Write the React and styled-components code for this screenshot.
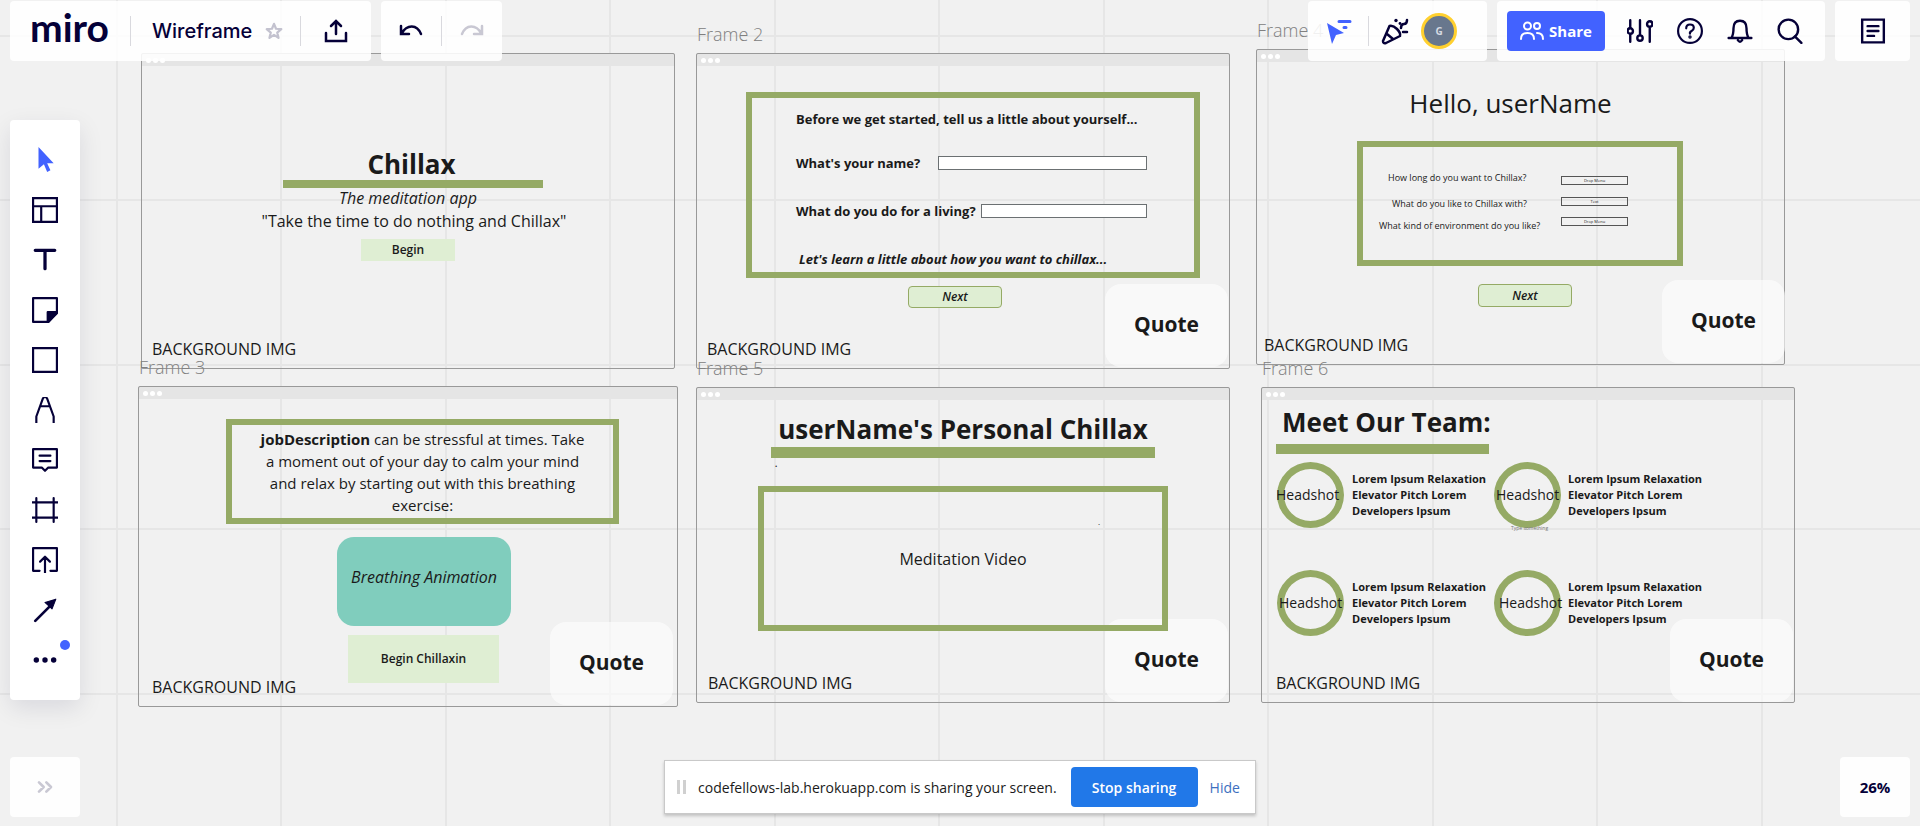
import React from 'react';
import styled, { createGlobalStyle, css } from 'styled-components';

const ink = '#050038';
const green = '#95aa65';
const blue = '#4262ff';

const GlobalStyle = createGlobalStyle`
  *, *::before, *::after { box-sizing: border-box; }
  html, body { margin: 0; }
  body { font-family: "Open Sans", "Noto Sans", sans-serif; color: #1a1a1a; }
  button, input, select { font: inherit; color: inherit; margin: 0; padding: 0; }
  h1, h2, p { margin: 0; font-weight: inherit; }
  b { font-weight: 700; }
`;

/* ---------- page ---------- */

const Page = styled.div`
  position: relative;
  display: flex;
  flex-direction: column;
  justify-content: space-between;
  min-height: 100vh;
  overflow: hidden;
  background-color: #f1f1f1;
  background-image:
    linear-gradient(90deg, #e6e6e6 2px, transparent 2px),
    linear-gradient(90deg, #e6e6e6 2px, transparent 2px),
    linear-gradient(#e6e6e6 2px, transparent 2px),
    linear-gradient(#e6e6e6 2px, transparent 2px);
  background-size: 329px 329px;
  background-position: 116px 0, 280px 0, 0 35px, 0 199px;
`;

const Board = styled.main`
  position: absolute;
  inset: 0;
`;

const Panel = styled.div`
  display: flex;
  align-items: center;
  height: 60px;
  padding-right: ${(p) => p.$pr || 0}px;
  border-radius: 4px;
  background: rgba(255, 255, 255, 0.88);
  color: ${ink};
`;

const Overlay = styled.div`
  position: relative;
  display: flex;
  align-items: center;
  justify-content: space-between;
  padding: 0 10px;
  pointer-events: none;
  & > * { pointer-events: auto; }
`;

const TopBar = styled(Overlay).attrs({ as: 'header' })`
  padding-top: 1px;
  padding-bottom: 2px;
`;

const Group = styled.div`
  display: flex;
  gap: 10px;
`;

const IconButton = styled.button`
  position: relative;
  display: flex;
  align-items: center;
  justify-content: center;
  width: ${(p) => p.$w || 50}px;
  height: 50px;
  border: 0;
  background: none;
  color: ${(p) => p.$color || ink};
  cursor: pointer;
`;

const Divider = styled.span`
  width: 1px;
  height: 30px;
  margin-left: ${(p) => p.$gap || 0}px;
  background: #d9d9de;
`;

const Logo = styled.a`
  width: 120px;
  padding: 0 0 8px 20px;
  font: 700 39px/48px Lato, sans-serif;
  color: ${ink};
  text-decoration: none;
`;

const BoardName = styled.h1`
  padding: 0 8px 0 21px;
  font: 500 20px/28px Inter, sans-serif;
`;

const ShareButton = styled.button`
  display: flex;
  align-items: center;
  justify-content: center;
  gap: 5px;
  width: 98px;
  height: 40px;
  margin: 0 10px;
  border: 0;
  border-radius: 4px;
  background: ${blue};
  color: #fff;
  font-size: 15px;
  font-weight: 700;
`;

const Avatar = styled.button`
  width: 36px;
  height: 36px;
  border: 3px solid #ffd02f;
  border-radius: 50%;
  background: #68778d;
  color: #d5dae2;
  font-size: 10px;
  font-weight: 700;
`;

const Tools = styled.nav`
  position: relative;
  align-self: flex-start;
  display: flex;
  flex-direction: column;
  align-items: center;
  width: 70px;
  margin-left: 10px;
  padding: 15px 0;
  border-radius: 4px;
  background: #fff;
  box-shadow: 0 8px 24px rgba(5, 0, 56, 0.1);
`;

const Badge = styled.span`
  position: absolute;
  top: 5px;
  right: 0;
  width: 10px;
  height: 10px;
  border-radius: 50%;
  background: ${blue};
`;

const SmallPanel = styled(Panel).attrs({ as: 'button' })`
  justify-content: center;
  width: 70px;
  border: 0;
  font-size: 15px;
  font-weight: 700;
`;

const BottomBar = styled(Overlay).attrs({ as: 'footer' })`
  padding-bottom: 9px;
`;

const SharingBar = styled.div`
  display: flex;
  align-items: center;
  height: 54px;
  padding: 0 15px 0 12px;
  border: 1px solid #c9c9c9;
  background: #fff;
  box-shadow: 0 2px 3px rgba(0, 0, 0, 0.2);
  font-size: 14px;
  white-space: nowrap;
`;

const Grip = styled.span`
  width: 9px;
  height: 14px;
  margin-right: 12px;
  border: solid #d0d0d0;
  border-width: 0 3px;
`;

const StopButton = styled.button`
  width: 127px;
  height: 40px;
  margin: 0 12px 0 14px;
  border: 0;
  border-radius: 4px;
  background: #2178e8;
  color: #fff;
  font-weight: 600;
`;

const HideLink = styled.a`
  color: #3d6fc0;
  text-decoration: none;
`;

/* ---------- items on the board ---------- */

const place = css`
  position: absolute;
  left: ${(p) => p.$x}px;
  top: ${(p) => p.$y}px;
  width: ${(p) => (p.$w ? p.$w + 'px' : 'auto')};
  height: ${(p) => (p.$h ? p.$h + 'px' : 'auto')};
`;

const FrameBox = styled.section`
  ${place}
  border-radius: 2px;
  outline: 1px solid #999;
  outline-offset: -1px;
`;

const FrameHead = styled.div`
  display: flex;
  align-items: center;
  gap: 2px;
  height: 13px;
  padding: 1px 0 0 5px;
  background: #e5e5e5;
  & > i {
    width: 5px;
    height: 5px;
    border-radius: 50%;
    background: #fff;
  }
`;

const FrameLabel = styled.h2`
  ${place}
  font-size: 18px;
  font-weight: 300;
  line-height: 24px;
  color: #808080;
  white-space: nowrap;
`;

const Text = styled.p`
  ${place}
  font-size: ${(p) => p.$size || 16}px;
  font-weight: ${(p) => p.$weight || 400};
  font-style: ${(p) => (p.$italic ? 'italic' : 'normal')};
  line-height: ${(p) => p.$lh || 26}px;
  text-align: ${(p) => (p.$w ? 'center' : 'left')};
  color: ${(p) => p.$color || 'inherit'};
  white-space: nowrap;
`;

const Label = styled(Text).attrs({ as: 'label' })``;

const Bar = styled.div`
  ${place}
  background: ${green};
`;

const Outline = styled.div`
  ${place}
  display: flex;
  align-items: center;
  justify-content: center;
  padding: 0 26px;
  border: 6px solid ${green};
  font-size: ${(p) => p.$size || 16}px;
  line-height: 22px;
  text-align: center;
`;

const Ring = styled(Outline)`
  padding: 0;
  border-width: 7px;
  border-radius: 50%;
`;

const Field = styled.input`
  ${place}
  border: 1px solid #6b7072;
  background: #fff;
`;

const Picker = styled.select`
  ${place}
  appearance: none;
  border: 1px solid #555;
  border-radius: 0;
  background: none;
  font-size: 4px;
  line-height: 7px;
  text-align: center;
  text-align-last: center;
`;

const Action = styled.button`
  ${place}
  border: ${(p) => (p.$bordered ? `1px solid ${green}` : '0')};
  border-radius: ${(p) => (p.$bordered ? 4 : 0)}px;
  background: #dfeed3;
  font-size: 12px;
  font-weight: 600;
  font-style: ${(p) => (p.$bordered ? 'italic' : 'normal')};
  line-height: 20px;
`;

const Breathing = styled.div`
  ${place}
  padding-top: 27px;
  border-radius: 17px;
  background: #80cdbd;
  font-size: 16px;
  font-style: italic;
  line-height: 26px;
  text-align: center;
`;

const QuoteBox = styled.div`
  ${place}
  display: flex;
  align-items: center;
  justify-content: center;
  padding-bottom: 4px;
  border-radius: 16px;
  background: rgba(255, 255, 255, 0.6);
  font-size: 21px;
  font-weight: 700;
`;

function Frame({ x, y, w, h, label, children }) {
  return (
    <FrameBox $x={x} $y={y} $w={w} $h={h}>
      <FrameHead><i /><i /><i /></FrameHead>
      {label && <FrameLabel $x={1} $y={-31}>{label}</FrameLabel>}
      {children}
    </FrameBox>
  );
}

const Quote = ({ x, y }) => <QuoteBox $x={x} $y={y} $w={123} $h={83}>Quote</QuoteBox>;

const Background = ({ x, y }) => <Text $x={x} $y={y}>BACKGROUND IMG</Text>;

const team = [
  { x: 16, y: 75, nameX: 15, bioX: 91 },
  { x: 233, y: 75, nameX: 235, bioX: 307 },
  { x: 16, y: 183, nameX: 18, bioX: 91 },
  { x: 233, y: 183, nameX: 238, bioX: 307 },
];

const questions = [
  { id: 'long', text: 'How long do you want to Chillax?', x: 132, y: 116, fieldY: 127, option: 'Drop Menu' },
  { id: 'with', text: 'What do you like to Chillax with?', x: 136, y: 142, fieldY: 148, option: 'Text' },
  { id: 'kind', text: 'What kind of environment do you like?', x: 123, y: 164, fieldY: 168, option: 'Drop Menu' },
];

/* ---------- icons ---------- */

const Icon = ({ size = 24, sw = 2, h, children, box }) => (
  <svg width={size} height={h || size} viewBox={box || '0 0 24 24'} fill="none" stroke="currentColor"
    strokeWidth={sw} strokeLinecap="round" strokeLinejoin="round" aria-hidden="true">
    {children}
  </svg>
);

const tools = [
  ['Select', <path d="M6 0v20l5-4 3 7 3-1.500-3-6.500h6z" fill={blue} stroke="none" />, blue],
  ['Templates', <path d="M1 1h22v22H1zM1 8.500h22M8.500 8.500V23" strokeLinejoin="miter" />],
  ['Text', <path d="M3 3h18M12 3v17" strokeWidth="3" />],
  ['Sticky note', <><path d="M1 1h22v14l-8 8H1z" /><path d="M14.500 22.500V14H23l-8 9z" fill="currentColor" /></>],
  ['Shape', <path d="M1 1h22v22H1z" strokeLinejoin="miter" />],
  ['Pen', <path d="M4 24v-6L10 1.500q2-3 4 0L20 18v6M8 8.500h8" strokeLinecap="butt" />],
  ['Comment', <path d="M1 2h22v17h-8l-3 3-3-3H1zM7 8h10M7 13h10" />],
  ['Frame', <path d="M4 1v22M20 1v22M0 5h24M0 19h24" />],
  ['Upload', <path d="M7 22H1V1h22v21h-6M12 24V9M7.500 13.500L12 9l4.500 4.500" />],
  ['Arrow', <><path d="M3 22L18 7" strokeWidth="2.500" /><path d="M22 2l-3.500 9L12 5z" fill="currentColor" strokeWidth="1" /></>],
  ['More', <g fill="currentColor" stroke="none"><circle cx="4" cy="12" r="2.500" /><circle cx="12" cy="12" r="2.500" /><circle cx="20" cy="12" r="2.500" /></g>],
];

export default function App() {
  return (
    <>
      <GlobalStyle />
      <Page>
        <Board>
          <Frame x={141} y={53} w={534} h={316}>
            <Text $x={0} $y={93} $w={541} $size={26} $weight={700} $lh={36}>Chillax</Text>
            <Bar $x={142} $y={127} $w={260} $h={8} />
            <Text $x={0} $y={132} $w={534} $italic>The meditation app</Text>
            <Text $x={0} $y={155} $w={546}>"Take the time to do nothing and Chillax"</Text>
            <Action $x={220} $y={186} $w={94} $h={22}>Begin</Action>
            <Background x={11} y={283} />
          </Frame>

          <Frame x={696} y={53} w={534} h={316} label="Frame 2">
            <Outline $x={50} $y={39} $w={454} $h={186} />
            <Text $x={100} $y={53} $size={13} $weight={700}>Before we get started, tell us a little about yourself...</Text>
            <Label htmlFor="name" $x={100} $y={97} $size={13} $weight={700}>What's your name?</Label>
            <Field id="name" $x={242} $y={103} $w={209} $h={14} />
            <Label htmlFor="job" $x={100} $y={145} $size={13} $weight={700}>What do you do for a living?</Label>
            <Field id="job" $x={285} $y={151} $w={166} $h={14} />
            <Text $x={103} $y={193} $size={13} $weight={700} $italic>Let's learn a little about how you want to chillax...</Text>
            <Quote x={409} y={231} />
            <Action $x={212} $y={233} $w={94} $h={22} $bordered>Next</Action>
            <Background x={11} y={283} />
          </Frame>

          <Frame x={1256} y={49} w={529} h={316} label="Frame 4">
            <Text $x={0} $y={36} $w={509} $size={26} $lh={36}>Hello, userName</Text>
            <Outline $x={101} $y={92} $w={326} $h={125} />
            {questions.map((q) => (
              <React.Fragment key={q.id}>
                <Label htmlFor={q.id} $x={q.x} $y={q.y} $size={9}>{q.text}</Label>
                <Picker id={q.id} $x={305} $y={q.fieldY} $w={67} $h={9}><option>{q.option}</option></Picker>
              </React.Fragment>
            ))}
            <Action $x={222} $y={235} $w={94} $h={23} $bordered>Next</Action>
            <Quote x={406} y={231} />
            <Background x={8} y={283} />
          </Frame>

          <Frame x={138} y={386} w={540} h={321} label="Frame 3">
            <Outline $x={88} $y={33} $w={393} $h={105} $size={15}>
              <p><b>jobDescription</b> can be stressful at times. Take a moment out of your day to calm your mind and relax by starting out with this breathing exercise:</p>
            </Outline>
            <Breathing $x={199} $y={151} $w={174} $h={89}>Breathing Animation</Breathing>
            <Action $x={210} $y={249} $w={151} $h={48}>Begin Chillaxin</Action>
            <Quote x={412} y={236} />
            <Background x={14} y={288} />
          </Frame>

          <Frame x={696} y={387} w={534} h={316} label="Frame 5">
            <Text $x={0} $y={24} $w={534} $size={26} $weight={700} $lh={36}>userName's Personal Chillax</Text>
            <Bar $x={75} $y={60} $w={384} $h={11} />
            <Text $x={79} $y={71} $size={8} $weight={700} $lh={12}>.</Text>
            <Quote x={409} y={232} />
            <Outline $x={62} $y={99} $w={410} $h={145}>Meditation Video</Outline>
            <Text $x={402} $y={129} $size={8} $lh={12}>.</Text>
            <Background x={12} y={283} />
          </Frame>

          <Frame x={1261} y={387} w={534} h={316} label="Frame 6">
            <Text $x={21} $y={17} $size={26} $weight={700} $lh={36}>Meet Our Team:</Text>
            <Bar $x={15} $y={57} $w={213} $h={10} />
            {team.map((m) => (
              <React.Fragment key={m.nameX}>
                <Ring $x={m.x} $y={m.y} $w={67} $h={66} />
                <Text $x={m.nameX} $y={m.y + 20} $size={14}>Headshot</Text>
                <Text $x={m.bioX} $y={m.y + 9} $size={11} $weight={700} $lh={16}>
                  Lorem Ipsum Relaxation<br />Elevator Pitch Lorem<br />Developers Ipsum
                </Text>
              </React.Fragment>
            ))}
            <Text $x={250} $y={135} $size={5} $lh={12} $color="#777">Type something</Text>
            <Quote x={409} y={232} />
            <Background x={15} y={283} />
          </Frame>
        </Board>

        <TopBar>
          <Group>
            <Panel>
              <Logo href="#">miro</Logo>
              <Divider />
              <BoardName>Wireframe</BoardName>
              <IconButton $w={28} $color="#c3c2cf" aria-label="Star this board">
                <Icon size={18} sw={3}><path d="M12 2.500l2.700 6.500 7 .5-5.400 4.600 1.700 7L12 17.200l-6 3.900 1.700-7L2.300 9.500l7-.5z" /></Icon>
              </IconButton>
              <Divider $gap={12} />
              <IconButton $w={70} aria-label="Export">
                <Icon size={24} sw={2.500}><path d="M2 14v8h20v-8M12 15V3M7 7l5-5 5 5" strokeLinejoin="miter" /></Icon>
              </IconButton>
            </Panel>
            <Panel>
              <IconButton $w={60} aria-label="Undo">
                <Icon size={24} sw={2.500}><path d="M2 7v8h8M2.500 14.500C8 5 18 5 22 15" strokeLinejoin="miter" /></Icon>
              </IconButton>
              <Divider />
              <IconButton $w={60} $color="#c9c8d3" aria-label="Redo">
                <Icon size={24} sw={2.500}><path d="M22 7v8h-8M21.500 14.500C16 5 6 5 2 15" strokeLinejoin="miter" /></Icon>
              </IconButton>
            </Panel>
          </Group>

          <Group>
            <Panel $pr={30}>
              <IconButton $w={60} $color={blue} aria-label="Follow cursors">
                <Icon size={28} box="0 0 28 28" sw={3}>
                  <path d="M3 6l17 10-8 2-4 9z" fill="currentColor" stroke="none" />
                  <path d="M15 4.500h11M20 10.500h2" />
                </Icon>
              </IconButton>
              <Divider />
              <IconButton $w={52} aria-label="Reactions">
                <Icon size={28} box="0 0 28 28" sw={2.500}>
                  <path d="M8.500 9L2 24q0 3 3 2l14-7q1-3-3-7-4-4-7.500-3zM6 17l6 5M20 11q0-4 3-4t3-4M22 15h4" />
                  <g fill="currentColor" stroke="none"><circle cx="15" cy="3.500" r="1.700" /><circle cx="19" cy="6.500" r="1.400" /></g>
                </Icon>
              </IconButton>
              <Avatar aria-label="Account">G</Avatar>
            </Panel>
            <Panel $pr={10}>
              <ShareButton>
                <Icon size={24} h={22} box="0 0 24 22" sw={2}>
                  <circle cx="7.500" cy="6" r="3.500" /><circle cx="17" cy="6" r="3" />
                  <path d="M1 19q0-6 6.500-6t6.500 6M17 13q6 0 6 6" />
                </Icon>
                Share
              </ShareButton>
              <IconButton aria-label="Settings">
                <Icon size={26} sw={2.200}>
                  <path d="M3 2v7M3 15v7M12 2v13M21 9v13" />
                  <circle cx="3" cy="12" r="2.500" /><circle cx="12" cy="18.500" r="2.500" /><circle cx="21" cy="5.500" r="2.500" />
                </Icon>
              </IconButton>
              <IconButton aria-label="Help">
                <Icon size={26} sw={2}><circle cx="12" cy="12" r="11" /><path d="M8.500 9.500q0-3.500 3.500-3.500t3.500 3q0 2-2 3t-1.500 2.500" /><circle cx="12" cy="17.500" r="0.600" /></Icon>
              </IconButton>
              <IconButton aria-label="Notifications">
                <Icon size={26} sw={2.200}><path d="M1.500 18.500h21M4 18.500q2-3 2-9 0-7 6-7t6 7q0 6 2 9M10 20.500q2 3 4 0" /></Icon>
              </IconButton>
              <IconButton aria-label="Search">
                <Icon size={26} sw={2.200}><circle cx="10.500" cy="10.500" r="9" /><path d="M16.500 17l6 6" /></Icon>
              </IconButton>
            </Panel>
            <Panel>
              <IconButton $w={75} aria-label="Notes">
                <Icon size={26} sw={2.200}><path d="M2 1.500h20v21H2z" strokeLinejoin="miter" /><path d="M7 7.500h10M7 12h10M7 16.500h6" /></Icon>
              </IconButton>
            </Panel>
          </Group>
        </TopBar>

        <Tools aria-label="Tools">
          {tools.map(([name, drawing, color]) => (
            <IconButton key={name} $color={color} aria-label={name}>
              <Icon size={26}>{drawing}</Icon>
              {name === 'More' && <Badge />}
            </IconButton>
          ))}
        </Tools>

        <BottomBar>
          <SmallPanel aria-label="Expand">
            <Icon size={16} sw={4}><path d="M3 5l7 7-7 7M14 5l7 7-7 7" stroke="#c9c8d3" /></Icon>
          </SmallPanel>
          <SharingBar>
            <Grip />
            codefellows-lab.herokuapp.com is sharing your screen.
            <StopButton>Stop sharing</StopButton>
            <HideLink href="#">Hide</HideLink>
          </SharingBar>
          <SmallPanel>26%</SmallPanel>
        </BottomBar>
      </Page>
    </>
  );
}
